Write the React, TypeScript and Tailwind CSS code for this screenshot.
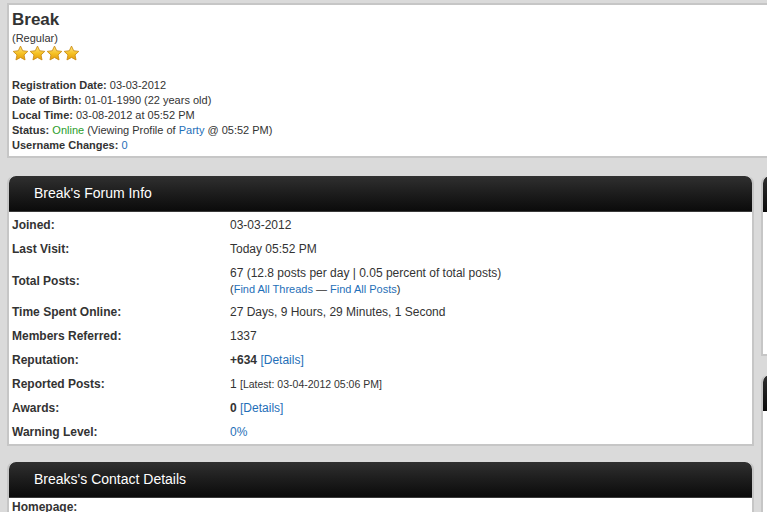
import React from 'react';

const link = 'text-[#1f6fb8]';

function Star() {
    return (
        <svg width="17" height="17" viewBox="0 0 24 24">
            <defs>
                <linearGradient id="starFill" x1="0" y1="0" x2="0" y2="1">
                    <stop offset="0" stopColor="#ffe680" />
                    <stop offset="0.55" stopColor="#f5c022" />
                    <stop offset="1" stopColor="#e39a0c" />
                </linearGradient>
            </defs>
            <path
                d="M12 1.5l3.1 6.6 7.2.9-5.3 5 1.4 7.1L12 17.6l-6.4 3.5 1.4-7.1-5.3-5 7.2-.9z"
                fill="url(#starFill)"
                stroke="#c98a12"
                strokeWidth="1.2"
                strokeLinejoin="round"
            />
        </svg>
    );
}

function BoxHeader({ title }: { title: string }) {
    return (
        <div className="h-[36px] rounded-t-[7px] bg-gradient-to-b from-[#303030] to-[#0b0b0b] border-b border-[#3a3a3a] flex items-center pl-[25px]">
            <span className="text-white text-[14px]">{title}</span>
        </div>
    );
}

const rows: { label: string; value: React.ReactNode; tall?: boolean }[] = [
    { label: 'Joined:', value: '03-03-2012' },
    { label: 'Last Visit:', value: 'Today 05:52 PM' },
    {
        label: 'Total Posts:',
        tall: true,
        value: (
            <div className="leading-[16px]">
                <div>67 (12.8 posts per day | 0.05 percent of total posts)</div>
                <div className="text-[11px]">
                    (<span className={link}>Find All Threads</span> — <span className={link}>Find All Posts</span>)
                </div>
            </div>
        ),
    },
    { label: 'Time Spent Online:', value: '27 Days, 9 Hours, 29 Minutes, 1 Second' },
    { label: 'Members Referred:', value: '1337' },
    {
        label: 'Reputation:',
        value: (
            <span>
                <b>+634</b> <span className={link}>[Details]</span>
            </span>
        ),
    },
    {
        label: 'Reported Posts:',
        value: (
            <span>
                1 <span className="text-[10.5px]">[Latest: 03-04-2012 05:06 PM]</span>
            </span>
        ),
    },
    {
        label: 'Awards:',
        value: (
            <span>
                <b>0</b> <span className={link}>[Details]</span>
            </span>
        ),
    },
    { label: 'Warning Level:', value: <span className={link}>0%</span> },
];

export default function App() {
    return (
        <div className="w-[767px] h-[512px] overflow-hidden bg-[#dadada] pt-[3px] pl-[7px] text-[#333] font-['Liberation_Sans',Arial,sans-serif]">
            {/* Profile summary */}
            <div className="w-[780px] bg-white border-2 border-[#c6c6c6] pl-[3px] pt-[5px] pb-[3px]">
                <div className="text-[17px] font-bold leading-[20px] text-[#333]">Break</div>
                <div className="text-[11px] leading-[14px] mt-[1px] text-[#333]">(Regular)</div>
                <div className="flex">
                    <Star />
                    <Star />
                    <Star />
                    <Star />
                </div>
                <div className="mt-[16px] text-[11px] leading-[15px]">
                    <div><b>Registration Date:</b> 03-03-2012</div>
                    <div><b>Date of Birth:</b> 01-01-1990 (22 years old)</div>
                    <div><b>Local Time:</b> 03-08-2012 at 05:52 PM</div>
                    <div>
                        <b>Status:</b> <span className="text-[#2a9d2a]">Online</span> (Viewing Profile of{' '}
                        <span className={link}>Party</span> @ 05:52 PM)
                    </div>
                    <div><b>Username Changes:</b> <span className={link}>0</span></div>
                </div>
            </div>

            <div className="flex gap-[7px] mt-[18px]">
                {/* Left column */}
                <div className="w-[747px] shrink-0 flex flex-col gap-[16px]">
                    <div className="border-2 border-t-0 border-[#c6c6c6] rounded-t-[7px] bg-white">
                        <BoxHeader title="Break's Forum Info" />
                        <div className="px-[3px] pt-[1px] text-[12px]">
                            {rows.map((r) => (
                                <div key={r.label} className={`flex items-center ${r.tall ? 'h-[39px]' : 'h-[24px]'}`}>
                                    <div className="w-[218px] shrink-0 font-bold">{r.label}</div>
                                    <div>{r.value}</div>
                                </div>
                            ))}
                        </div>
                    </div>
                    <div className="border-2 border-t-0 border-[#c6c6c6] rounded-t-[7px] bg-white">
                        <BoxHeader title="Breaks's Contact Details" />
                        <div className="px-[3px] pt-[2px] text-[12px] font-bold leading-[14px]">Homepage:</div>
                        <div className="h-[40px]" />
                    </div>
                </div>

                {/* Right column (cut off) */}
                <div className="w-[200px] shrink-0 flex flex-col gap-[19px]">
                    <div className="border-2 border-t-0 border-[#c6c6c6] rounded-t-[7px] bg-white h-[180px]">
                        <div className="h-[36px] rounded-t-[7px] bg-gradient-to-b from-[#303030] to-[#0b0b0b]" />
                    </div>
                    <div className="border-2 border-t-0 border-[#c6c6c6] rounded-t-[7px] bg-white h-[180px]">
                        <div className="h-[36px] rounded-t-[7px] bg-gradient-to-b from-[#303030] to-[#0b0b0b]" />
                    </div>
                </div>
            </div>
        </div>
    );
}
